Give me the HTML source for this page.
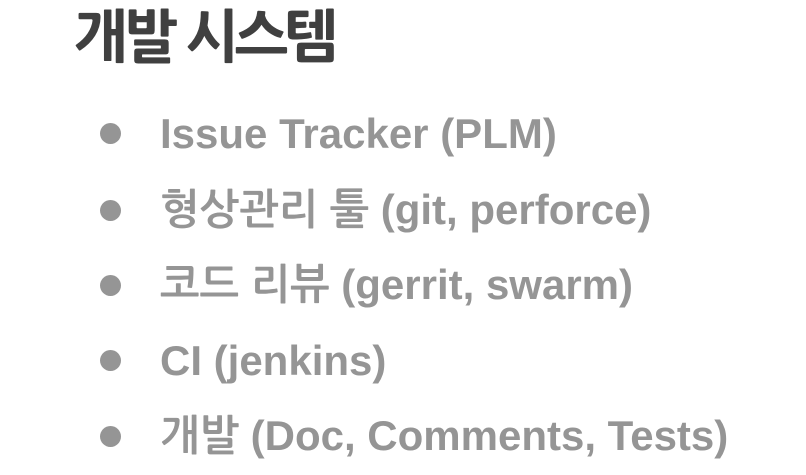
<!DOCTYPE html>
<html><head><meta charset="utf-8"><style>
body{margin:0;width:806px;height:475px;background:#fff;overflow:hidden;position:relative;font-family:"Liberation Sans","NanumGothic","Noto Sans CJK KR",sans-serif;font-weight:bold}
.t{position:absolute;left:74px;top:9px;font-size:57px;color:#404040;letter-spacing:-4px;white-space:nowrap;font-family:"NanumGothic","Noto Sans CJK KR",sans-serif;font-weight:900}
.i{position:absolute;left:160px;font-size:42px;color:#959595;white-space:nowrap;letter-spacing:0px;line-height:1}
.d{position:absolute;left:100px;width:21px;height:21px;border-radius:50%;background:#959595}
</style></head><body>
<div class="t">개발 시스템</div>
<div class="d" style="top:123px"></div><div class="i" style="top:113px">Issue Tracker (PLM)</div>
<div class="d" style="top:200px"></div><div class="i" style="top:189px">형상관리 툴 (git, perforce)</div>
<div class="d" style="top:275px"></div><div class="i" style="top:264px">코드 리뷰 (gerrit, swarm)</div>
<div class="d" style="top:350px"></div><div class="i" style="top:340px">CI (jenkins)</div>
<div class="d" style="top:426px"></div><div class="i" style="top:415px">개발 (Doc, Comments, Tests)</div>
</body></html>
